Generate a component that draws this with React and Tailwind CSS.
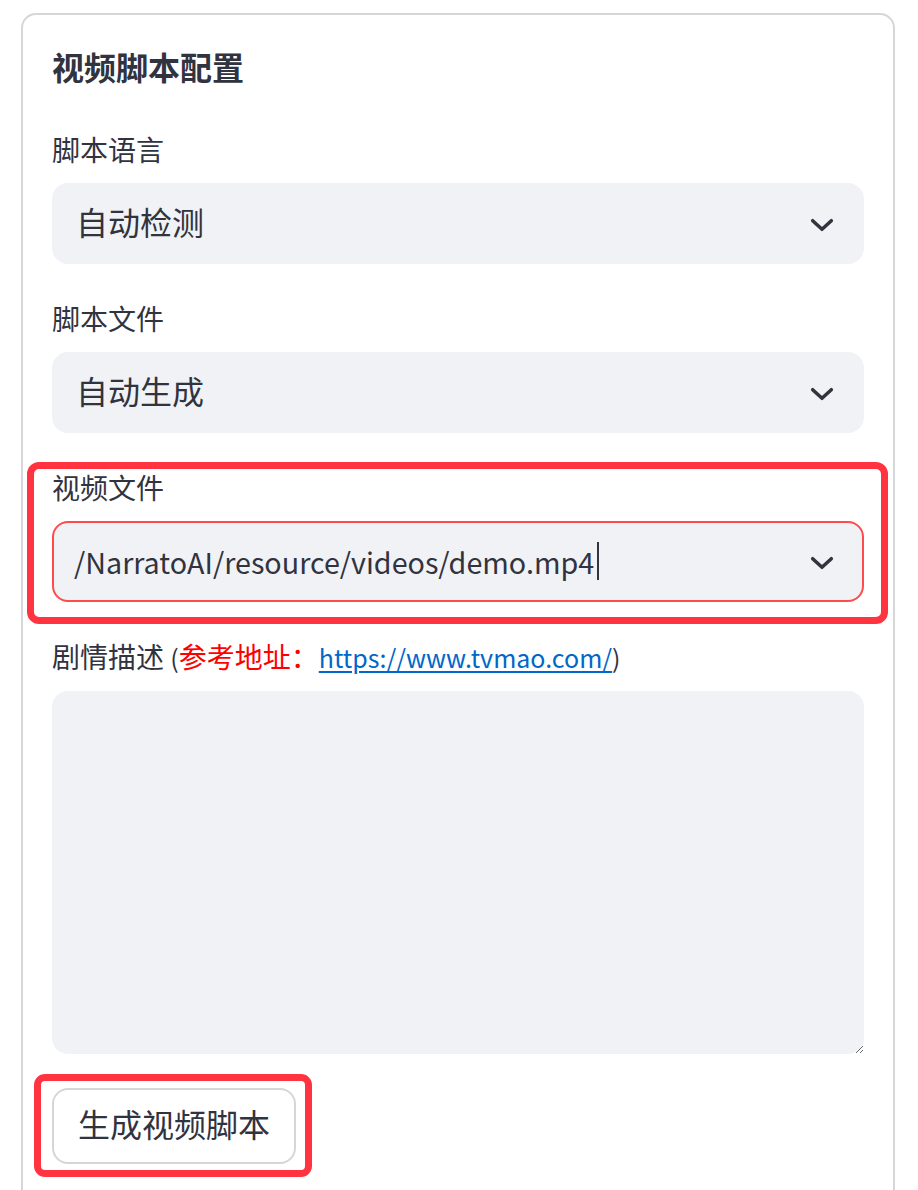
import React from 'react'

const font = { fontFamily: '"Noto Sans CJK SC", "Noto Sans", sans-serif' }

function Chevron() {
  return (
    <svg width="32" height="32" viewBox="0 0 24 24" fill="none" className="shrink-0">
      <polyline points="5,9.5 12,16 19,9.5" stroke="#31333f" strokeWidth="2.6" strokeLinecap="round" strokeLinejoin="round" />
    </svg>
  )
}

function Label({ children }) {
  return <div className="text-[28px] leading-[35px] pb-[5px] text-[#31333f]">{children}</div>
}

function SelectBox({ value, active }) {
  return (
    <div
      className={`mt-[11px] h-[81px] rounded-[16px] bg-[#f0f2f6] flex items-center justify-between pr-[24px] border-2
        ${active ? 'border-[#ff4b4b] pl-[20px]' : 'border-[#f0f2f6] pl-[22px]'}`}
    >
      <div className="flex items-center text-[#31333f]">
        {active ? (
          <>
            <span className="text-[28.7px]">{value}</span>
            <span className="ml-[3px] w-[2px] h-[38px] bg-[#31333f]" />
          </>
        ) : (
          <span className="text-[32px] pb-[6px]">{value}</span>
        )}
      </div>
      <Chevron />
    </div>
  )
}

export default function App() {
  return (
    <div className="bg-white min-h-[1190px] pt-[13px] pl-[21px]" style={font}>
      <div className="w-[874px] border-2 border-[#d6d6d9] rounded-[15px] px-[29px] pt-[27px] pb-[60px]">
        <h2 className="text-[32px] leading-[48px] font-bold text-[#31333f]">视频脚本配置</h2>

        <div className="mt-[42px]">
          <Label>脚本语言</Label>
          <SelectBox value="自动检测" />
        </div>

        <div className="mt-[37px]">
          <Label>脚本文件</Label>
          <SelectBox value="自动生成" />
        </div>

        <div className="mt-[37px] relative">
          <Label>视频文件</Label>
          <SelectBox value="/NarratoAI/resource/videos/demo.mp4" active />
          <div className="absolute -left-[25px] -right-[24px] -top-[8px] -bottom-[22px] border-[7px] border-[#ff3440] rounded-[12px] pointer-events-none" />
        </div>

        <div className="mt-[37px]">
          <Label>
            剧情描述 <span className="text-[25px]">(</span><span className="text-[#ff0000]">参考地址：</span>
            <a href="#" className="text-[25px] text-[#0068c9] underline underline-offset-[3px]">https://www.tvmao.com/</a>
            <span className="text-[25px]">)</span>
          </Label>
          <textarea
            className="mt-[11px] block w-full h-[363px] rounded-[16px] bg-[#f0f2f6] outline-none px-[22px] py-[16px] text-[32px] text-[#31333f]"
            style={font}
          />
        </div>

        <div className="mt-[34px] relative w-[244px]">
          <button className="w-[244px] h-[76px] pb-[6px] border-2 border-[#d6d6d9] rounded-[16px] bg-white text-[32px] text-[#31333f]" style={font}>
            生成视频脚本
          </button>
          <div className="absolute -left-[18px] -right-[16px] -top-[14px] -bottom-[13px] border-[7px] border-[#ff3440] rounded-[11px] pointer-events-none" />
        </div>
      </div>
    </div>
  )
}
